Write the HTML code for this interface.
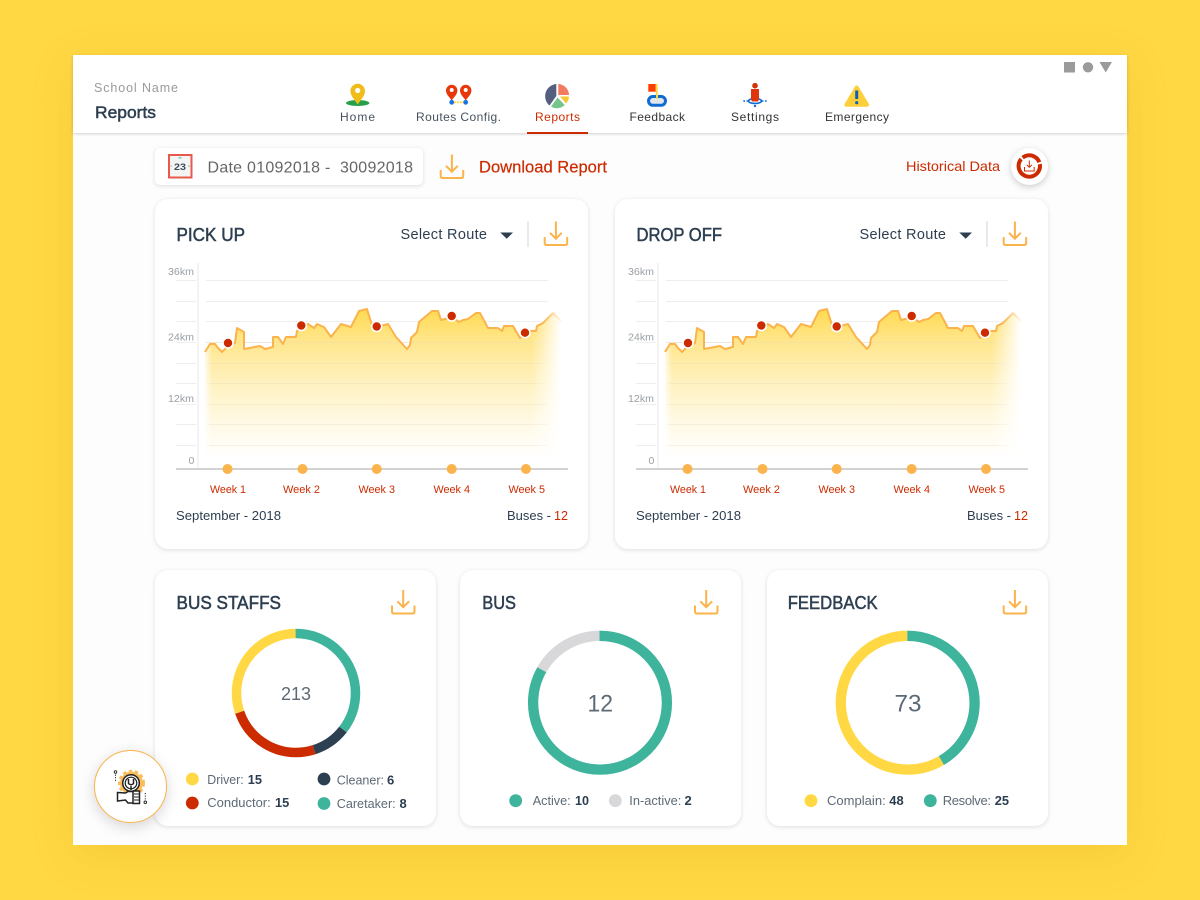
<!DOCTYPE html>
<html><head><meta charset="utf-8"><title>Reports</title>
<style>
html,body{margin:0;padding:0}
body{width:1200px;height:900px;overflow:hidden;background:#ffd843;position:relative;font-family:"Liberation Sans",sans-serif}
.win{position:absolute;left:73px;top:55px;width:1054px;height:790px;background:#fdfdfd;box-shadow:0 10px 40px rgba(190,140,0,.16)}
.hdr{position:absolute;left:73px;top:55px;width:1054px;height:78px;background:#fff;box-shadow:0 1px 3px rgba(0,0,0,.18)}
.c{position:absolute;background:#fff;border-radius:13px;box-shadow:0 1px 5px rgba(0,0,0,.13)}
svg{position:absolute;left:0;top:0}
text{font-family:"Liberation Sans",sans-serif;fill:#2c3e50}
.m{stroke:#2c3e50;stroke-width:.5px}
.b{font-weight:700}
.r{fill:#cc2b00}
.g{fill:#9aa0a6}
.l{fill:#5d6a76}
</style></head><body>
<div class="win"></div><div class="hdr"></div>
<div class="c" style="left:155px;top:148px;width:268px;height:37px;border-radius:5px"></div>
<div class="c" style="left:155px;top:199px;width:433px;height:350px"></div>
<div class="c" style="left:615px;top:199px;width:433px;height:350px"></div>
<div class="c" style="left:155px;top:570px;width:281px;height:256px"></div>
<div class="c" style="left:460px;top:570px;width:281px;height:256px"></div>
<div class="c" style="left:767px;top:570px;width:281px;height:256px"></div>
<div class="c" style="left:1011px;top:148px;width:37px;height:37px;border-radius:50%;box-shadow:0 2px 7px rgba(0,0,0,.2)"></div>

<svg width="1200" height="900" viewBox="0 0 1200 900" xmlns="http://www.w3.org/2000/svg">
<defs>
<linearGradient id="area" gradientUnits="userSpaceOnUse" x1="0" y1="312" x2="0" y2="458">
<stop offset="0" stop-color="#ffdb55"/><stop offset=".2" stop-color="#ffe68c"/><stop offset=".47" stop-color="#fff1bd"/><stop offset=".75" stop-color="#fff9e4"/><stop offset="1" stop-color="#ffffff"/></linearGradient>
<linearGradient id="fr" x1="0" x2="1" y1="0" y2="0"><stop offset="0" stop-color="#fff" stop-opacity="0"/><stop offset=".85" stop-color="#fff"/></linearGradient>
<linearGradient id="fl" x1="0" x2="1" y1="0" y2="0"><stop offset="0" stop-color="#fff"/><stop offset="1" stop-color="#fff" stop-opacity="0"/></linearGradient>
<linearGradient id="ln" gradientUnits="userSpaceOnUse" x1="205" x2="563" y1="0" y2="0"><stop offset=".94" stop-color="#fbb34c"/><stop offset="1" stop-color="#fbb34c" stop-opacity="0"/></linearGradient>
<g id="dl" fill="none" stroke="#fbb34c" stroke-width="2">
<path d="M12.2 0V17.2M6.3 11.3L12.2 17.2L18.1 11.3"/>
<path d="M1 15.5V21.5Q1 23.5 3 23.5H21.5Q23.5 23.5 23.5 21.5V15.5"/>
</g>
<g id="chart">
<g stroke="#eeeeee" stroke-width="1">
<path d="M176 280.5H196M206 280.5H548M176 301.5H196M206 301.5H548M176 321.5H196M206 321.5H548M176 342.5H196M206 342.5H548M176 363.5H196M206 363.5H548M176 383.5H196M206 383.5H548M176 404.5H196M206 404.5H548M176 424.5H196M206 424.5H548M176 445.5H196M206 445.5H548"/>
</g>
<path d="M198 263V468" stroke="#f3f3f5" stroke-width="2"/>
<path fill="url(#area)" d="M205 352L210 344H215L218 348L222 352L227 347L235 343L237 328L244 332L244 349L260 346L265 349L273 347V337H278L283 344L286 337H296L297 331L301 326L308 324L314 328L317 324L324 327L331 337L341 324L351 327L359 311L367 309L372 325L377 327L388 324L396 337L407 349L410 345L411 338L417 332L419 322L432 311H438L441 320L445 319L452 317L459 322L463 320L468 319L476 313H480L488 328H498L502 331L504 326H513L520 338L525 333L530 331L536 331L537 326L543 323L553 313L562 322V458H205Z"/>
<path stroke="#e8dcb8" stroke-opacity=".4" stroke-width="1" d="M206 342.5H548M206 363.5H548M206 383.5H548M206 404.5H548M206 424.5H548M206 445.5H548"/>
<rect x="531" y="311" width="35" height="150" fill="url(#fr)"/>
<rect x="203" y="345" width="9" height="116" fill="url(#fl)"/>
<path fill="none" stroke="url(#ln)" stroke-width="2" stroke-linejoin="round" d="M205 352L210 344H215L218 348L222 352L227 347L235 343L237 328L244 332L244 349L260 346L265 349L273 347V337H278L283 344L286 337H296L297 331L301 326L308 324L314 328L317 324L324 327L331 337L341 324L351 327L359 311L367 309L372 325L377 327L388 324L396 337L407 349L410 345L411 338L417 332L419 322L432 311H438L441 320L445 319L452 317L459 322L463 320L468 319L476 313H480L488 328H498L502 331L504 326H513L520 338L525 333L530 331L536 331L537 326L543 323L553 313L562 322"/>
<g fill="#cc2b00" stroke="#fff" stroke-width="1.6">
<circle cx="228" cy="343" r="5"/><circle cx="301.3" cy="325.5" r="5"/><circle cx="376.7" cy="326.5" r="5"/><circle cx="451.7" cy="316" r="5"/><circle cx="525" cy="332.7" r="5"/>
</g>
<path d="M176 469H568" stroke="#d2d2d2" stroke-width="2"/>
<g fill="#fbb34c"><circle cx="227.5" cy="469" r="5"/><circle cx="302.5" cy="469" r="5"/><circle cx="376.7" cy="469" r="5"/><circle cx="451.7" cy="469" r="5"/><circle cx="526" cy="469" r="5"/></g>
</g>
</defs>

<!-- window controls -->
<rect x="1064" y="62" width="11" height="10.5" fill="#9b9b9b"/><circle cx="1088" cy="67.3" r="5.2" fill="#9b9b9b"/><path d="M1099.5 62H1112L1105.7 72.5Z" fill="#9b9b9b"/>

<!-- header text -->
<text x="94" y="92" font-size="12.5" textLength="84" lengthAdjust="spacing" style="fill:#9a9a9a">School Name</text>
<text x="95" y="118" font-size="17" textLength="61" lengthAdjust="spacingAndGlyphs" class="m">Reports</text>

<!-- nav icons -->
<ellipse cx="357.7" cy="103" rx="11.7" ry="3" fill="#27a04a"/>
<path d="M357.7 104.5C354 99 350.4 95.5 350.4 91A7.3 7.3 0 0 1 365 91C365 95.5 361.4 99 357.7 104.5Z" fill="#f0bc1a"/><circle cx="357.7" cy="90.5" r="2.6" fill="#fff"/>
<g fill="#e8380b"><path d="M451.7 100.5C449.5 97 446 94.5 446 90.5A5.7 5.7 0 0 1 457.4 90.5C457.4 94.5 453.9 97 451.7 100.5Z"/><path d="M465.7 100.5C463.5 97 460 94.5 460 90.5A5.7 5.7 0 0 1 471.4 90.5C471.4 94.5 467.9 97 465.7 100.5Z"/></g>
<circle cx="451.7" cy="90" r="2" fill="#fff"/><circle cx="465.7" cy="90" r="2" fill="#fff"/>
<path d="M454 102.3H463.5" stroke="#fbd54a" stroke-width="1.8" stroke-dasharray="2 .8"/>
<circle cx="451.7" cy="102.3" r="2.4" fill="#1a73e0"/><circle cx="465.7" cy="102.3" r="2.4" fill="#1a73e0"/>
<path d="M556.3 84V96L549.5 105.5A12.2 12.2 0 0 1 556.3 84Z" fill="#55607f"/>
<path d="M558.3 84A11.3 11.3 0 0 1 569 95H558.3Z" fill="#f27a5f"/>
<path d="M560 96.5H569A11.5 11.5 0 0 1 566 103.5Z" fill="#f7c630"/>
<path d="M557.5 97.5L564.8 105A12 12 0 0 1 551 106.8Z" fill="#76c58d"/>
<rect x="648.3" y="84" width="7.4" height="7.7" fill="#ff3d00"/><rect x="655.7" y="84" width="2" height="15" fill="#fbd54a"/>
<rect x="648.5" y="96.5" width="17" height="8.8" rx="4.4" fill="#e3e6ec" stroke="#0f6cd1" stroke-width="3"/>
<path d="M657 95V99" stroke="#fbd54a" stroke-width="2"/>
<ellipse cx="755" cy="101" rx="6.5" ry="2.4" fill="#fff" stroke="#0f6cd1" stroke-width="1.6"/>
<circle cx="755" cy="85.7" r="2.8" fill="#d23208"/><path d="M751 89H759V99.5L758 101.5H752L751 99.5Z" fill="#e0360c"/>
<path d="M743.3 101H745M746.5 101H748M762 101H763.5M765 101H766.7" stroke="#0f6cd1" stroke-width="1.6"/><circle cx="755" cy="106" r="1.2" fill="#0f6cd1"/>
<path d="M856.7 87.5L867 104.8H846.4Z" fill="#fdd03b" stroke="#fdd03b" stroke-width="4" stroke-linejoin="round"/>
<path d="M856.7 90.5V99" stroke="#0f5fb5" stroke-width="3"/><circle cx="856.7" cy="102.7" r="1.6" fill="#0f5fb5"/>

<g font-size="12">
<text x="340" y="121" textLength="35" lengthAdjust="spacing" style="fill:#45525e">Home</text>
<text x="416" y="121" textLength="85" lengthAdjust="spacing" style="fill:#45525e">Routes Config.</text>
<text x="535" y="121" textLength="45" lengthAdjust="spacing" class="r">Reports</text>
<text x="629.5" y="121" textLength="55.5" lengthAdjust="spacing" style="fill:#333">Feedback</text>
<text x="731" y="121" textLength="48" lengthAdjust="spacing" style="fill:#333">Settings</text>
<text x="825" y="121" textLength="64" lengthAdjust="spacing" style="fill:#333">Emergency</text>
</g>
<rect x="527" y="132" width="61" height="2" fill="#cc2b00"/>

<!-- toolbar -->
<rect x="169" y="155" width="22.5" height="22.5" fill="#f4f4f4" stroke="#e8594d" stroke-width="2"/>
<rect x="178.5" y="157" width="3" height="1.5" fill="#6fd0c0"/>
<path d="M170.5 166H172M188 166H190" stroke="#aaa" stroke-width="1"/>
<text x="174" y="170" font-size="9.5" class="b" textLength="12" lengthAdjust="spacingAndGlyphs" style="fill:#3b4c5c">23</text>
<text x="207.5" y="172.3" font-size="16" textLength="205.5" lengthAdjust="spacing" style="fill:#666;white-space:pre">Date 01092018 -  30092018</text>
<use href="#dl" x="439.7" y="154.5"/>
<text x="479" y="172.3" font-size="16.5" textLength="128" lengthAdjust="spacingAndGlyphs" class="r" style="stroke:#cc2b00;stroke-width:.2px">Download Report</text>
<text x="906" y="171" font-size="14" textLength="94" lengthAdjust="spacingAndGlyphs" class="r">Historical Data</text>
<g fill="none" stroke="#cc2b00">
<circle cx="1029.3" cy="166" r="10.7" stroke-width="4" pathLength="100" stroke-dasharray="64 3 30 3" transform="rotate(-10 1029.3 166)"/>
<path d="M1029.3 160.5V167M1026.7 164.8L1029.3 167.3L1031.9 164.8M1024.5 167V171H1034.2V167" stroke-width="1"/>
</g>

<!-- pick up -->
<text x="176.5" y="241" font-size="18" textLength="68.5" lengthAdjust="spacingAndGlyphs" class="m">PICK UP</text>
<text x="400.5" y="239" font-size="14.5" textLength="86.5" lengthAdjust="spacing">Select Route</text>
<path d="M500.3 232.5H513L506.7 238.8Z" fill="#2c3e50"/>
<path d="M528 221V247" stroke="#e3e3e3" stroke-width="1.5"/>
<use href="#dl" x="543.7" y="221.5"/>
<use href="#chart"/>
<g font-size="10.5">
<text x="168" y="275" textLength="26" lengthAdjust="spacingAndGlyphs" class="g">36km</text>
<text x="168" y="340.5" textLength="26" lengthAdjust="spacingAndGlyphs" class="g">24km</text>
<text x="168" y="402" textLength="26" lengthAdjust="spacingAndGlyphs" class="g">12km</text>
<text x="188.5" y="464" class="g">0</text>
</g>
<g font-size="11">
<text x="210" y="493" textLength="36" lengthAdjust="spacingAndGlyphs" class="r">Week 1</text>
<text x="283" y="493" textLength="37" lengthAdjust="spacingAndGlyphs" class="r">Week 2</text>
<text x="358.5" y="493" textLength="36.5" lengthAdjust="spacingAndGlyphs" class="r">Week 3</text>
<text x="433.5" y="493" textLength="36.5" lengthAdjust="spacingAndGlyphs" class="r">Week 4</text>
<text x="508.5" y="493" textLength="36.5" lengthAdjust="spacingAndGlyphs" class="r">Week 5</text>
</g>
<text x="176" y="520" font-size="13" textLength="105" lengthAdjust="spacingAndGlyphs">September - 2018</text>
<text x="507" y="520" font-size="13" textLength="44" lengthAdjust="spacingAndGlyphs">Buses -</text>
<text x="554" y="520" font-size="13" textLength="14" lengthAdjust="spacingAndGlyphs" class="r">12</text>

<!-- drop off -->
<text x="636.5" y="241" font-size="18" textLength="85.5" lengthAdjust="spacingAndGlyphs" class="m">DROP OFF</text>
<text x="859.5" y="239" font-size="14.5" textLength="86.5" lengthAdjust="spacing">Select Route</text>
<path d="M959.3 232.5H972L965.7 238.8Z" fill="#2c3e50"/>
<path d="M987 221V247" stroke="#e3e3e3" stroke-width="1.5"/>
<use href="#dl" x="1002.7" y="221.5"/>
<use href="#chart" x="460"/>
<g font-size="10.5">
<text x="628" y="275" textLength="26" lengthAdjust="spacingAndGlyphs" class="g">36km</text>
<text x="628" y="340.5" textLength="26" lengthAdjust="spacingAndGlyphs" class="g">24km</text>
<text x="628" y="402" textLength="26" lengthAdjust="spacingAndGlyphs" class="g">12km</text>
<text x="648.5" y="464" class="g">0</text>
</g>
<g font-size="11">
<text x="670" y="493" textLength="36" lengthAdjust="spacingAndGlyphs" class="r">Week 1</text>
<text x="743" y="493" textLength="37" lengthAdjust="spacingAndGlyphs" class="r">Week 2</text>
<text x="818.5" y="493" textLength="36.5" lengthAdjust="spacingAndGlyphs" class="r">Week 3</text>
<text x="893.5" y="493" textLength="36.5" lengthAdjust="spacingAndGlyphs" class="r">Week 4</text>
<text x="968.5" y="493" textLength="36.5" lengthAdjust="spacingAndGlyphs" class="r">Week 5</text>
</g>
<text x="636" y="520" font-size="13" textLength="105" lengthAdjust="spacingAndGlyphs">September - 2018</text>
<text x="967" y="520" font-size="13" textLength="44" lengthAdjust="spacingAndGlyphs">Buses -</text>
<text x="1014" y="520" font-size="13" textLength="14" lengthAdjust="spacingAndGlyphs" class="r">12</text>

<!-- bus staffs -->
<text x="176.5" y="609" font-size="18" textLength="104.5" lengthAdjust="spacingAndGlyphs" class="m">BUS STAFFS</text>
<use href="#dl" x="391" y="590"/>
<g fill="none" stroke-width="9.5" transform="rotate(-90 296 693)">
<circle cx="296" cy="693" r="59.5" pathLength="360" stroke="#3fb49c" stroke-dasharray="128 232"/>
<circle cx="296" cy="693" r="59.5" pathLength="360" stroke="#2c4051" stroke-dasharray="34.5 325.5" stroke-dashoffset="-128"/>
<circle cx="296" cy="693" r="59.5" pathLength="360" stroke="#cc2b00" stroke-dasharray="89 271" stroke-dashoffset="-162.5"/>
<circle cx="296" cy="693" r="59.5" pathLength="360" stroke="#ffd843" stroke-dasharray="108.5 251.5" stroke-dashoffset="-251.5"/>
</g>
<text x="281" y="700" font-size="18" textLength="30" lengthAdjust="spacingAndGlyphs" class="l">213</text>
<circle cx="192.3" cy="779" r="6.4" fill="#ffd843"/><circle cx="192.3" cy="803" r="6.4" fill="#cc2b00"/>
<circle cx="324" cy="779" r="6.4" fill="#2c4051"/><circle cx="324" cy="803.5" r="6.4" fill="#3fb49c"/>
<g font-size="13">
<text x="207.3" y="784" textLength="36.4" lengthAdjust="spacingAndGlyphs" class="l">Driver:</text>
<text x="247.7" y="784" textLength="14.3" lengthAdjust="spacingAndGlyphs" class="b">15</text>
<text x="207.3" y="807" textLength="63.4" lengthAdjust="spacingAndGlyphs" class="l">Conductor:</text>
<text x="275" y="807" textLength="14.3" lengthAdjust="spacingAndGlyphs" class="b">15</text>
<text x="336.7" y="784.5" textLength="47.3" lengthAdjust="spacingAndGlyphs" class="l">Cleaner:</text>
<text x="387" y="784.5" class="b">6</text>
<text x="336.7" y="808" textLength="59" lengthAdjust="spacingAndGlyphs" class="l">Caretaker:</text>
<text x="399.5" y="808" class="b">8</text>
</g>

<!-- bus -->
<text x="482.3" y="609" font-size="18" textLength="33.7" lengthAdjust="spacingAndGlyphs" class="m">BUS</text>
<use href="#dl" x="694" y="590"/>
<g fill="none" stroke-width="10.3" transform="rotate(-90 600 702.7)">
<circle cx="600" cy="702.7" r="66.9" pathLength="360" stroke="#3fb49c" stroke-dasharray="300 60"/>
<circle cx="600" cy="702.7" r="66.9" pathLength="360" stroke="#d8d8da" stroke-dasharray="60 300" stroke-dashoffset="-300"/>
</g>
<text x="587.5" y="711.5" font-size="24" textLength="25.5" lengthAdjust="spacingAndGlyphs" class="l">12</text>
<circle cx="515.7" cy="800.7" r="6.4" fill="#3fb49c"/><circle cx="615.3" cy="800.7" r="6.4" fill="#d8d8da"/>
<g font-size="13">
<text x="532.7" y="805" textLength="38" lengthAdjust="spacingAndGlyphs" class="l">Active:</text>
<text x="575" y="805" textLength="14" lengthAdjust="spacingAndGlyphs" class="b">10</text>
<text x="629.3" y="805" textLength="52" lengthAdjust="spacingAndGlyphs" class="l">In-active:</text>
<text x="684.5" y="805" class="b">2</text>
</g>

<!-- feedback -->
<text x="787.7" y="609" font-size="18" textLength="90" lengthAdjust="spacingAndGlyphs" class="m">FEEDBACK</text>
<use href="#dl" x="1002.7" y="590"/>
<g fill="none" stroke-width="10.3" transform="rotate(-90 907.7 702.7)">
<circle cx="907.7" cy="702.7" r="66.9" pathLength="360" stroke="#3fb49c" stroke-dasharray="150 210"/>
<circle cx="907.7" cy="702.7" r="66.9" pathLength="360" stroke="#ffd843" stroke-dasharray="210 150" stroke-dashoffset="-150"/>
</g>
<text x="894.5" y="711.5" font-size="24" textLength="27" lengthAdjust="spacingAndGlyphs" class="l">73</text>
<circle cx="811" cy="800.7" r="6.4" fill="#ffd843"/><circle cx="930.3" cy="800.7" r="6.4" fill="#3fb49c"/>
<g font-size="13">
<text x="827" y="805" textLength="58.7" lengthAdjust="spacingAndGlyphs" class="l">Complain:</text>
<text x="889.3" y="805" textLength="14.4" lengthAdjust="spacingAndGlyphs" class="b">48</text>
<text x="942.7" y="805" textLength="48.3" lengthAdjust="spacing" class="l">Resolve:</text>
<text x="994.7" y="805" textLength="14.3" lengthAdjust="spacingAndGlyphs" class="b">25</text>
</g>
</svg>

<div class="c" style="left:94px;top:750px;width:71px;height:71px;border-radius:50%;border:1px solid #fbb34c;box-shadow:0 4px 14px rgba(0,0,0,.16)"></div>
<svg width="1200" height="900" viewBox="0 0 1200 900" xmlns="http://www.w3.org/2000/svg">
<circle cx="131.5" cy="783.3" r="11.5" fill="#f8bd5c"/>
<circle cx="131.5" cy="783.3" r="12.3" fill="none" stroke="#f8bd5c" stroke-width="2.4" stroke-dasharray="3.5 2.6"/>
<circle cx="131" cy="783" r="8.3" fill="#fff" stroke="#222" stroke-width="1.5"/>
<circle cx="131" cy="783" r="5.8" fill="none" stroke="#222" stroke-width="1.2"/>
<path d="M128.5 779V783.5Q131 786 133.5 783.5V779M131 786V790" fill="none" stroke="#222" stroke-width="1.5"/>
<path d="M117.5 792.5L125.5 793L128 791.5H134V803H128L125.5 800L117.5 801Z" fill="#fff" stroke="#222" stroke-width="1.5"/>
<rect x="133" y="791" width="6.5" height="12.5" fill="#fff" stroke="#222" stroke-width="1.5"/>
<path d="M134 794H139M134 797H139M134 800H139" stroke="#222" stroke-width="1.1"/>
<circle cx="115.5" cy="772" r="1.3" fill="#fff" stroke="#222" stroke-width=".9"/>
<path d="M115.5 774.5V782M145.3 793V800.5" stroke="#222" stroke-width="1" stroke-dasharray="1.2 1.4"/>
<circle cx="145.3" cy="802.3" r="1.3" fill="#fff" stroke="#222" stroke-width=".9"/>
</svg>
</body></html>
